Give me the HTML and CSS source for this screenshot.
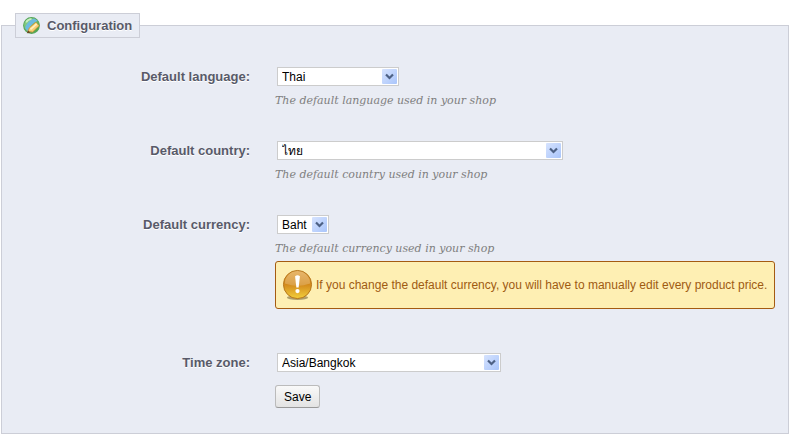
FILE: index.html
```html
<!DOCTYPE html>
<html lang="en">
<head>
    <meta charset="UTF-8">
    <meta name="viewport" content="width=device-width, initial-scale=1.0">
    <title>Configuration</title>
    <link rel="stylesheet" href="styles.css">
</head>
<body>
    <form>
        <fieldset class="panel">
            <legend class="panel_title">
                <svg class="icon" viewBox="0 0 16 16" aria-hidden="true">
                    <defs>
                        <linearGradient id="globe" x1="0" y1="0" x2="1" y2="1">
                            <stop offset="0" stop-color="#9bdc98"/>
                            <stop offset="1" stop-color="#3f9a3c"/>
                        </linearGradient>
                    </defs>
                    <circle cx="8" cy="8" r="7.4" fill="url(#globe)" stroke="#57a65b"/>
                    <path d="M10.500 1.500C7 2.500 3 6 2 10.500L5 14C6 9.500 9 5.500 14 3.500Z" fill="#6dbbe0"/>
                    <path d="M3 5C4 3 6 2 8 1.800" fill="none" stroke="#c8efc0" stroke-width="1.500"/>
                    <path d="M4.600 13.500L6 10.200 12 5 15.200 8.200 9 14.200Z" fill="#f7cf78" stroke="#d18b2c" stroke-width=".7"/>
                    <path d="M7 11.700L13 6.500" stroke="#fff0bd" stroke-width="1.600"/>
                    <path d="M3.600 15.400L4.800 12.600 7 14.800Z" fill="#6b4524"/>
                </svg>
                Configuration
            </legend>

            <div class="row">
                <label class="name" for="language">Default language:</label>
                <div class="field">
                    <select id="language" class="select language">
                        <option>Thai</option>
                    </select>
                    <p class="hint">The default language used in your shop</p>
                </div>
            </div>

            <div class="row">
                <label class="name" for="country">Default country:</label>
                <div class="field">
                    <select id="country" class="select country">
                        <option lang="th">ไทย</option>
                    </select>
                    <p class="hint">The default country used in your shop</p>
                </div>
            </div>

            <div class="row">
                <label class="name" for="currency">Default currency:</label>
                <div class="field">
                    <select id="currency" class="select currency">
                        <option>Baht</option>
                    </select>
                    <p class="hint">The default currency used in your shop</p>
                    <div class="warn">
                        <svg class="warn_icon" viewBox="0 0 32 32" aria-hidden="true">
                            <defs>
                                <linearGradient id="ball" x1="0" y1="0" x2="0" y2="1">
                                    <stop offset="0" stop-color="#e2a548"/>
                                    <stop offset=".5" stop-color="#d38a1c"/>
                                    <stop offset="1" stop-color="#f2cf3c"/>
                                </linearGradient>
                            </defs>
                            <ellipse cx="16" cy="29" rx="11" ry="2.500" fill="#8f7d4c" opacity=".7"/>
                            <circle cx="16" cy="15.500" r="14.500" fill="url(#ball)" stroke="#b5741a"/>
                            <path d="M3 14.500A13 13 0 0 1 29 14.500Q16 19 3 14.500Z" fill="#fff" opacity=".2"/>
                            <path d="M13.500 7Q16 5 18.500 7L17.200 18.500H14.800Z" fill="#fff"/>
                            <circle cx="16" cy="22.300" r="2.200" fill="#fff"/>
                        </svg>
                        <span>If you change the default currency, you will have to manually edit every product price.</span>
                    </div>
                </div>
            </div>

            <div class="row">
                <label class="name" for="timezone">Time zone:</label>
                <div class="field">
                    <select id="timezone" class="select timezone">
                        <option>Asia/Bangkok</option>
                    </select>
                    <button class="button" type="submit">Save</button>
                </div>
            </div>
        </fieldset>
    </form>
</body>
</html>
```
FILE: styles.css
```css
body {
    margin: 13px 12px 5px 1px;
    background: #fff;
    color: #000;
    font-family: "Liberation Sans", Arial, "Noto Sans", sans-serif;
    font-size: 12px;
}

.panel {
    min-width: 0;
    margin: 0;
    padding: 29px 13px 25px;
    border: 1px solid #ccced7;
    background: #e9ecf4;
}

.panel_title {
    display: flex;
    align-items: center;
    gap: 7px;
    padding: 3px 7px;
    border: 1px solid #ccced7;
    background: #e9ecf4;
    color: #585a69;
    font-size: 13px;
    font-weight: bold;
    line-height: 16px;
    text-shadow: 0 1px 0 #fff;
}

.icon {
    width: 17px;
    height: 17px;
}

.row {
    display: grid;
    grid-template-columns: 235px minmax(0, 500px);
    column-gap: 25px;
    margin-bottom: 32px;
}

.row:last-child {
    margin-bottom: 0;
}

.name {
    color: #585a69;
    font-size: 13px;
    font-weight: bold;
    line-height: 19px;
    text-align: right;
    text-shadow: 0 1px 0 #fff;
}

.select {
    display: block;
    box-sizing: border-box;
    max-width: 100%;
    height: 19px;
    margin: 0 2px;
    padding: 0 20px 0 4px;
    border: 1px solid #ccc;
    border-radius: 0;
    appearance: none;
    background: #fff url("data:image/svg+xml,%3Csvg xmlns='http://www.w3.org/2000/svg' width='15' height='15'%3E%3Cdefs%3E%3ClinearGradient id='a' x2='1' y2='1'%3E%3Cstop stop-color='%23d6e3fe'/%3E%3Cstop offset='1' stop-color='%23a9c5fb'/%3E%3C/linearGradient%3E%3C/defs%3E%3Crect width='15' height='15' rx='1' fill='url(%23a)'/%3E%3Cpath d='M4 5.500L7.500 9 11 5.500' fill='none' stroke='%234d6185' stroke-width='2.200'/%3E%3C/svg%3E") no-repeat right 1px center;
    color: #000;
    font: 12px "Liberation Sans", Arial, "Noto Sans", sans-serif;
}

.language {
    width: 122px;
}

.country {
    width: 286px;
}

.currency {
    width: 52px;
}

.timezone {
    width: 224px;
}

.hint {
    margin: 7px 0 0;
    color: #7f7f7f;
    font-family: "DejaVu Serif", Georgia, serif;
    font-size: 11px;
    font-style: italic;
    line-height: 16px;
}

.warn {
    display: flex;
    align-items: center;
    gap: 3px;
    box-sizing: border-box;
    min-height: 48px;
    margin: 4px 0 12px;
    padding: 6px;
    border: 1px solid #a45b12;
    border-radius: 3px;
    background: #feefb3;
    color: #9f5b12;
    line-height: 16px;
}

.warn_icon {
    flex: none;
    width: 31px;
    height: 32px;
}

.button {
    display: block;
    height: 23px;
    margin: 13px 0 0;
    padding: 0 8px;
    border: 1px solid #bbb;
    border-bottom-color: #999;
    border-radius: 3px;
    background: linear-gradient(#f9f9f9, #e3e3e3);
    color: #000;
    font: 12px "Liberation Sans", Arial, sans-serif;
}
```
